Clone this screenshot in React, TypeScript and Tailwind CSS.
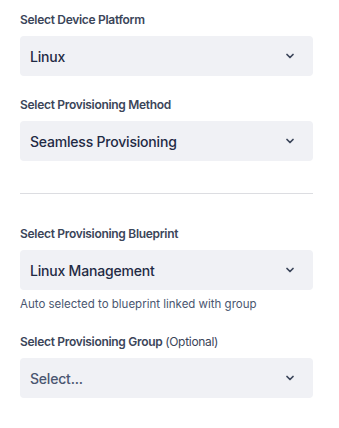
import { ChevronDown } from "lucide-react"

function Select({ value, placeholder }: { value?: string; placeholder?: string }) {
  return (
    <div className="flex h-10 w-full items-center justify-between rounded bg-[#f0f1f5] pl-[10px] pr-[17px]">
      <span
        className={
          value
            ? "text-[14px] font-medium tracking-[-0.2px] text-[#1f2a44]"
            : "text-[14px] font-medium tracking-[-0.2px] text-[#4a5670]"
        }
      >
        {value ?? placeholder}
      </span>
      <ChevronDown className="h-3 w-3 text-[#3b4559]" strokeWidth={3.5} />
    </div>
  )
}

function Label({ children }: { children: React.ReactNode }) {
  return (
    <div className="mb-2 text-[12px] leading-4 font-semibold tracking-[-0.3px] text-[#3b4559]">
      {children}
    </div>
  )
}

export default function App() {
  return (
    <div className="min-h-screen bg-white font-['Inter',sans-serif]">
      <div className="ml-5 w-[293px] pt-3">
        <Label>Select Device Platform</Label>
        <Select value="Linux" />

        <div className="mt-[21px]">
          <Label>Select Provisioning Method</Label>
          <Select value="Seamless Provisioning" />
        </div>

        <div className="mt-8 h-px bg-[#dcdde1]" />

        <div className="mt-[32px]">
          <Label>Select Provisioning Blueprint</Label>
          <Select value="Linux Management" />
          <div className="mt-[7px] text-[11.5px] leading-[14px] text-[#4a5670]">
            Auto selected to blueprint linked with group
          </div>
        </div>

        <div className="mt-[23px]">
          <Label>
            Select Provisioning Group <span className="font-normal">(Optional)</span>
          </Label>
          <Select placeholder="Select..." />
        </div>
      </div>
    </div>
  )
}
